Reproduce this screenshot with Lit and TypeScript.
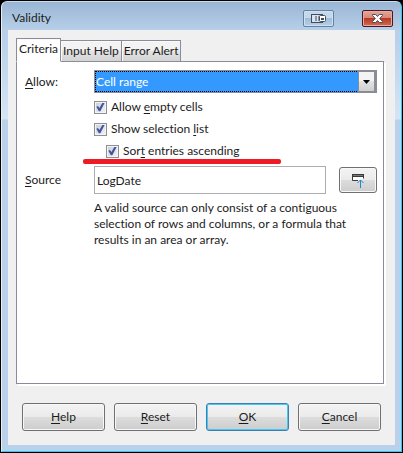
import { LitElement, html, css } from "lit";
import { customElement, state } from "lit/decorators.js";

@customElement("app-root")
export class AppRoot extends LitElement {
  static styles = css`
    :host {
      display: block;
      font: 12px/16px Lato, "Open Sans", sans-serif;
      font-variant-ligatures: none;
      color: #1c1c1c;
    }
    *,
    *::before {
      box-sizing: border-box;
    }
    button,
    input,
    select {
      font: inherit;
      color: inherit;
      margin: 0;
    }
    u {
      text-underline-offset: 2px;
      text-decoration-skip-ink: none;
    }
    .backdrop {
      background: #000;
      padding: 1px;
      min-height: 100vh;
      display: flex;
    }
    .window {
      flex: 1;
      min-width: 0;
      display: flex;
      flex-direction: column;
      border: 1px solid #36c8ee;
      border-left-color: #e4f3fb;
      border-top-color: #c9dcee;
      border-radius: 6px 6px 0 0;
      padding: 0 6px 6px;
      background: linear-gradient(#9ab6d5 0, #b7cfe8 28px, #b9d1ea 40px, #d5e5f6 117px, #b9d1ea 118px);
    }
    .titlebar {
      height: 28px;
      display: flex;
      align-items: center;
      padding: 4px 2px 0 4px;
    }
    .title {
      flex: 1;
      margin: 0;
      font-size: 12px;
      font-weight: 400;
    }
    .caption {
      width: 31px;
      height: 17px;
      padding: 0;
      display: grid;
      place-items: center;
      border: 1px solid #6480a2;
      border-radius: 2px;
      background: linear-gradient(#c4d8ed 0 45%, #9fbcda 50%, #b7d0e9);
      box-shadow: inset 0 0 0 1px #cfe0f1;
    }
    .caption.close {
      margin-left: 28px;
      border-color: #4b1620;
      background: linear-gradient(#e3a69a 0, #d7897b 45%, #b93a21 50%, #cf6b52);
      box-shadow: inset 0 0 0 1px #e5aca1;
    }
    .body {
      flex: 1;
      display: flex;
      flex-direction: column;
      background: #f0f0f0;
      padding: 8px 8px 14px;
    }
    .tabs {
      display: flex;
      align-items: flex-end;
      position: relative;
      z-index: 1;
      margin-bottom: -1px;
    }
    .tab {
      height: 22px;
      padding: 0 2px;
      border: 1px solid #8a8c98;
      border-left-width: 0;
      background: linear-gradient(#f3f3f3 0 45%, #e4e4e4 50%, #d3d3d3);
      box-shadow: inset 1px 1px #fafafa;
      white-space: nowrap;
    }
    .tab.on {
      height: 24px;
      padding: 0 2px 2px;
      border-left-width: 1px;
      border-bottom-color: #fff;
      background: #fff;
    }
    .panel {
      flex: 1;
      background: #fff;
      border: 1px solid #8a8c98;
      box-shadow: 2px 2px #fff;
      margin-right: 3px;
      padding: 8px 6px 8px 8px;
    }
    .form {
      display: grid;
      grid-template-columns: 69px minmax(0, 1fr);
      align-items: center;
    }
    .second {
      grid-column: 2;
    }
    .combo {
      display: grid;
      grid-template-columns: minmax(0, 1fr) 17px;
      height: 23px;
      border: 1px solid #8a8c98;
      border-right-width: 2px;
    }
    .combo select {
      grid-area: 1 / 1 / 2 / 3;
      appearance: none;
      border: 0;
      border-radius: 0;
      padding: 0 17px 0 1px;
      background: #3399ff;
      color: #fff;
      outline: 1px dotted #000;
      outline-offset: -1px;
    }
    .arrow {
      grid-area: 1 / 2;
      z-index: 1;
      pointer-events: none;
      display: grid;
      place-items: center;
      border: 1px solid #8a8c98;
      background: linear-gradient(#f4f4f4 0 45%, #e2e2e2 50%, #cfcfcf);
    }
    .checks {
      display: grid;
      gap: 6px;
      padding: 6px 0 7px;
      position: relative;
    }
    .check {
      display: flex;
      align-items: center;
      gap: 4px;
      justify-self: start;
    }
    .check.nested {
      margin-left: 12px;
    }
    .check input {
      appearance: none;
      width: 13px;
      height: 13px;
      border: 1px solid #8e8f8f;
      background: linear-gradient(135deg, #c8ced6, #f3f4f6);
      box-shadow: inset 0 0 0 1px #f4f4f4;
      display: grid;
      place-items: center;
    }
    .check input:checked::before {
      content: "";
      width: 9px;
      height: 9px;
      background: #42549c;
      clip-path: polygon(4% 46%, 22% 40%, 38% 62%, 74% 0, 98% 0, 48% 98%, 32% 98%);
    }
    .marker {
      position: absolute;
      left: -11px;
      bottom: 2px;
      width: 198px;
      height: 5px;
      border-radius: 2px;
      background: #ed1c24;
    }
    .source {
      display: flex;
      align-items: center;
      gap: 13px;
    }
    .source input {
      flex: 1;
      min-width: 0;
      height: 28px;
      border: 1px solid #abadb3;
      padding: 0 2px;
      background: #fff;
    }
    .push {
      height: 28px;
      padding: 0;
      border: 1px solid #707070;
      border-radius: 3px;
      background: linear-gradient(#f3f3f3 0, #ebebeb 48%, #dcdcdc 52%, #cdcdcd);
      box-shadow: inset 0 0 0 1px #f8f8f8;
    }
    .shrink {
      width: 38px;
      height: 26px;
      display: grid;
      place-items: center;
    }
    .push.default {
      border-color: #3c7fb1;
      box-shadow: inset 0 0 0 1px #48c8f0;
    }
    .hint {
      margin: 6px 0 0;
      max-width: 264px;
    }
    .actions {
      display: grid;
      grid-template-columns: repeat(4, minmax(0, 1fr));
      gap: 9px;
      margin: 19px 6px 0;
    }
  `;

  @state() private tab = 0;

  render() {
    return html`
      <div class="backdrop">
        <section class="window" role="dialog" aria-labelledby="title">
          <header class="titlebar">
            <h1 class="title" id="title">Validity</h1>
            <button class="caption" aria-label="Dock window">
              <svg width="17" height="11" viewBox="0 0 17 11">
                <rect x="1.5" y="1.5" width="11" height="8" fill="#d9e2ed" stroke="#454c5c" />
                <path d="M5 3h2v5H5zM8 3h1v5H8z" fill="#8b96a8" />
                <rect x="9.5" y="2.5" width="6" height="6" rx="1" fill="#fff" stroke="#454c5c" />
                <path d="M11 5h3v2h-3z" fill="#454c5c" />
              </svg>
            </button>
            <button class="caption close" aria-label="Close">
              <svg width="13" height="11" viewBox="0 0 13 11">
                <path
                  d="M1.5 1.5h3.2l1.8 2 1.8-2h3.2v1L8.7 5.5l2.8 3v1H8.3l-1.8-2-1.8 2H1.5v-1l2.8-3-2.8-3z"
                  fill="#fff" stroke="#4a4b5c"
                />
              </svg>
            </button>
          </header>
          <div class="body">
            <div class="tabs" role="tablist">
              ${["Criteria", "Input Help", "Error Alert"].map(
                (name, i) => html`<button
                  class="tab ${i === this.tab ? "on" : ""}"
                  role="tab"
                  aria-selected=${i === this.tab}
                  @click=${() => (this.tab = i)}
                >${name}</button>`
              )}
            </div>
            <div class="panel" role="tabpanel">
              <div class="form">
                <label for="allow"><u>A</u>llow:</label>
                <div class="combo">
                  <select id="allow">
                    <option>Cell range</option>
                  </select>
                  <span class="arrow">
                    <svg width="7" height="4" viewBox="0 0 7 4"><path d="M0 0h7L3.5 4z" /></svg>
                  </span>
                </div>
                <div class="checks second">
                  <label class="check"><input type="checkbox" checked /><span>Allow <u>e</u>mpty cells</span></label>
                  <label class="check"><input type="checkbox" checked /><span>Show selection <u>l</u>ist</span></label>
                  <label class="check nested"><input type="checkbox" checked /><span>Sor<u>t</u> entries ascending</span></label>
                  <span class="marker"></span>
                </div>
                <label for="source"><u>S</u>ource</label>
                <div class="source">
                  <input id="source" type="text" value="LogDate" />
                  <button class="push shrink" aria-label="Shrink">
                    <svg width="14" height="15" viewBox="0 0 14 15">
                      <path d="M7 7.5H1.5v-6h11v4" fill="#fff" stroke="#3a3a38" />
                      <path d="M1 1h12v3H1z" fill="#3a3a38" />
                      <path d="M2 2h10v1H2z" fill="#797774" />
                      <path d="M9.5 15V7M6.5 10l3-3 3 3" fill="none" stroke="#1e8bcd" />
                    </svg>
                  </button>
                </div>
                <p class="hint second">
                  A valid source can only consist of a contiguous selection of rows and columns, or a formula that
                  results in an area or array.
                </p>
              </div>
            </div>
            <div class="actions">
              <button class="push"><u>H</u>elp</button>
              <button class="push"><u>R</u>eset</button>
              <button class="push default"><u>O</u>K</button>
              <button class="push"><u>C</u>ancel</button>
            </div>
          </div>
        </section>
      </div>
    `;
  }
}
